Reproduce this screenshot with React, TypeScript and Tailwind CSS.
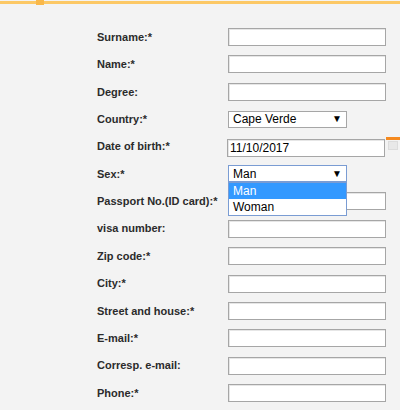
import React from 'react';

const ROWS = [
  { label: 'Surname:*' },
  { label: 'Name:*' },
  { label: 'Degree:' },
  { label: 'Country:*', kind: 'country' },
  { label: 'Date of birth:*', kind: 'date' },
  { label: 'Sex:*', kind: 'sex' },
  { label: 'Passport No.(ID card):*' },
  { label: 'visa number:' },
  { label: 'Zip code:*' },
  { label: 'City:*' },
  { label: 'Street and house:*' },
  { label: 'E-mail:*' },
  { label: 'Corresp. e-mail:' },
  { label: 'Phone:*' },
];

function TextBox({ value }: { value?: string }) {
  return (
    <div className="w-[158px] h-[18px] bg-white border border-[#a6a6a6] shadow-[inset_1px_1px_0_#e6e6e6] flex items-center pl-[2px] text-[12px] text-black">
      {value}
    </div>
  );
}

function Select({ value, focused }: { value: string; focused?: boolean }) {
  return (
    <div
      className={
        focused
          ? 'w-[119px] h-[17px] bg-white border border-[#7a9cd3] flex items-center justify-between pl-[4px] pr-[4px] text-[12px] text-black'
          : 'w-[119px] h-[17px] bg-white border border-[#a6a6a6] flex items-center justify-between pl-[4px] pr-[4px] text-[12px] text-black'
      }
    >
      <span>{value}</span>
      <span className="text-[10px] leading-none">▼</span>
    </div>
  );
}

export default function App() {
  return (
    <div className="w-[400px] h-[410px] bg-[#f3f3f3] relative overflow-hidden font-['Liberation_Sans',Arial,sans-serif]">
      {/* top orange rule */}
      <div className="h-[5px] flex items-start">
        <div className="mt-[1px] h-[3px] w-[36px] bg-[#fcc865]" />
        <div className="h-[5px] w-[8px] bg-[#f9b84a]" />
        <div className="mt-[1px] h-[3px] flex-1 bg-[#fcc865]" />
      </div>

      <div className="pt-[23px] flex flex-col gap-[9.4px]">
        {ROWS.map((row) => (
          <div key={row.label} className="flex items-center h-[18px]">
            <div className="w-[228px] pl-[97px] text-[11px] font-bold text-[#2b2b2b]">{row.label}</div>
            {row.kind === 'country' && <Select value="Cape Verde" />}
            {row.kind === 'date' && (
              <div className="flex items-start mt-[2px]">
                <TextBox value="11/10/2017" />
                <div className="flex flex-col -mt-[2px] ml-[1px]">
                  <div className="h-[3px] w-[14px] bg-[#f58a1f]" />
                  <div className="mt-[1px] ml-[2px] h-[9px] w-[10px] bg-[#e8e8e8] border border-[#dcdcdc]" />
                </div>
              </div>
            )}
            {row.kind === 'sex' && (
              <div className="relative">
                <Select value="Man" focused />
                <div className="absolute left-0 top-[17px] w-[119px] bg-white border border-[#7a9cd3] text-[12px] z-10">
                  <div className="h-[16px] flex items-center pl-[4px] bg-[#3399ff] text-white">Man</div>
                  <div className="h-[16px] flex items-center pl-[4px] text-black">Woman</div>
                </div>
              </div>
            )}
            {!row.kind && <TextBox />}
          </div>
        ))}
      </div>
    </div>
  );
}
